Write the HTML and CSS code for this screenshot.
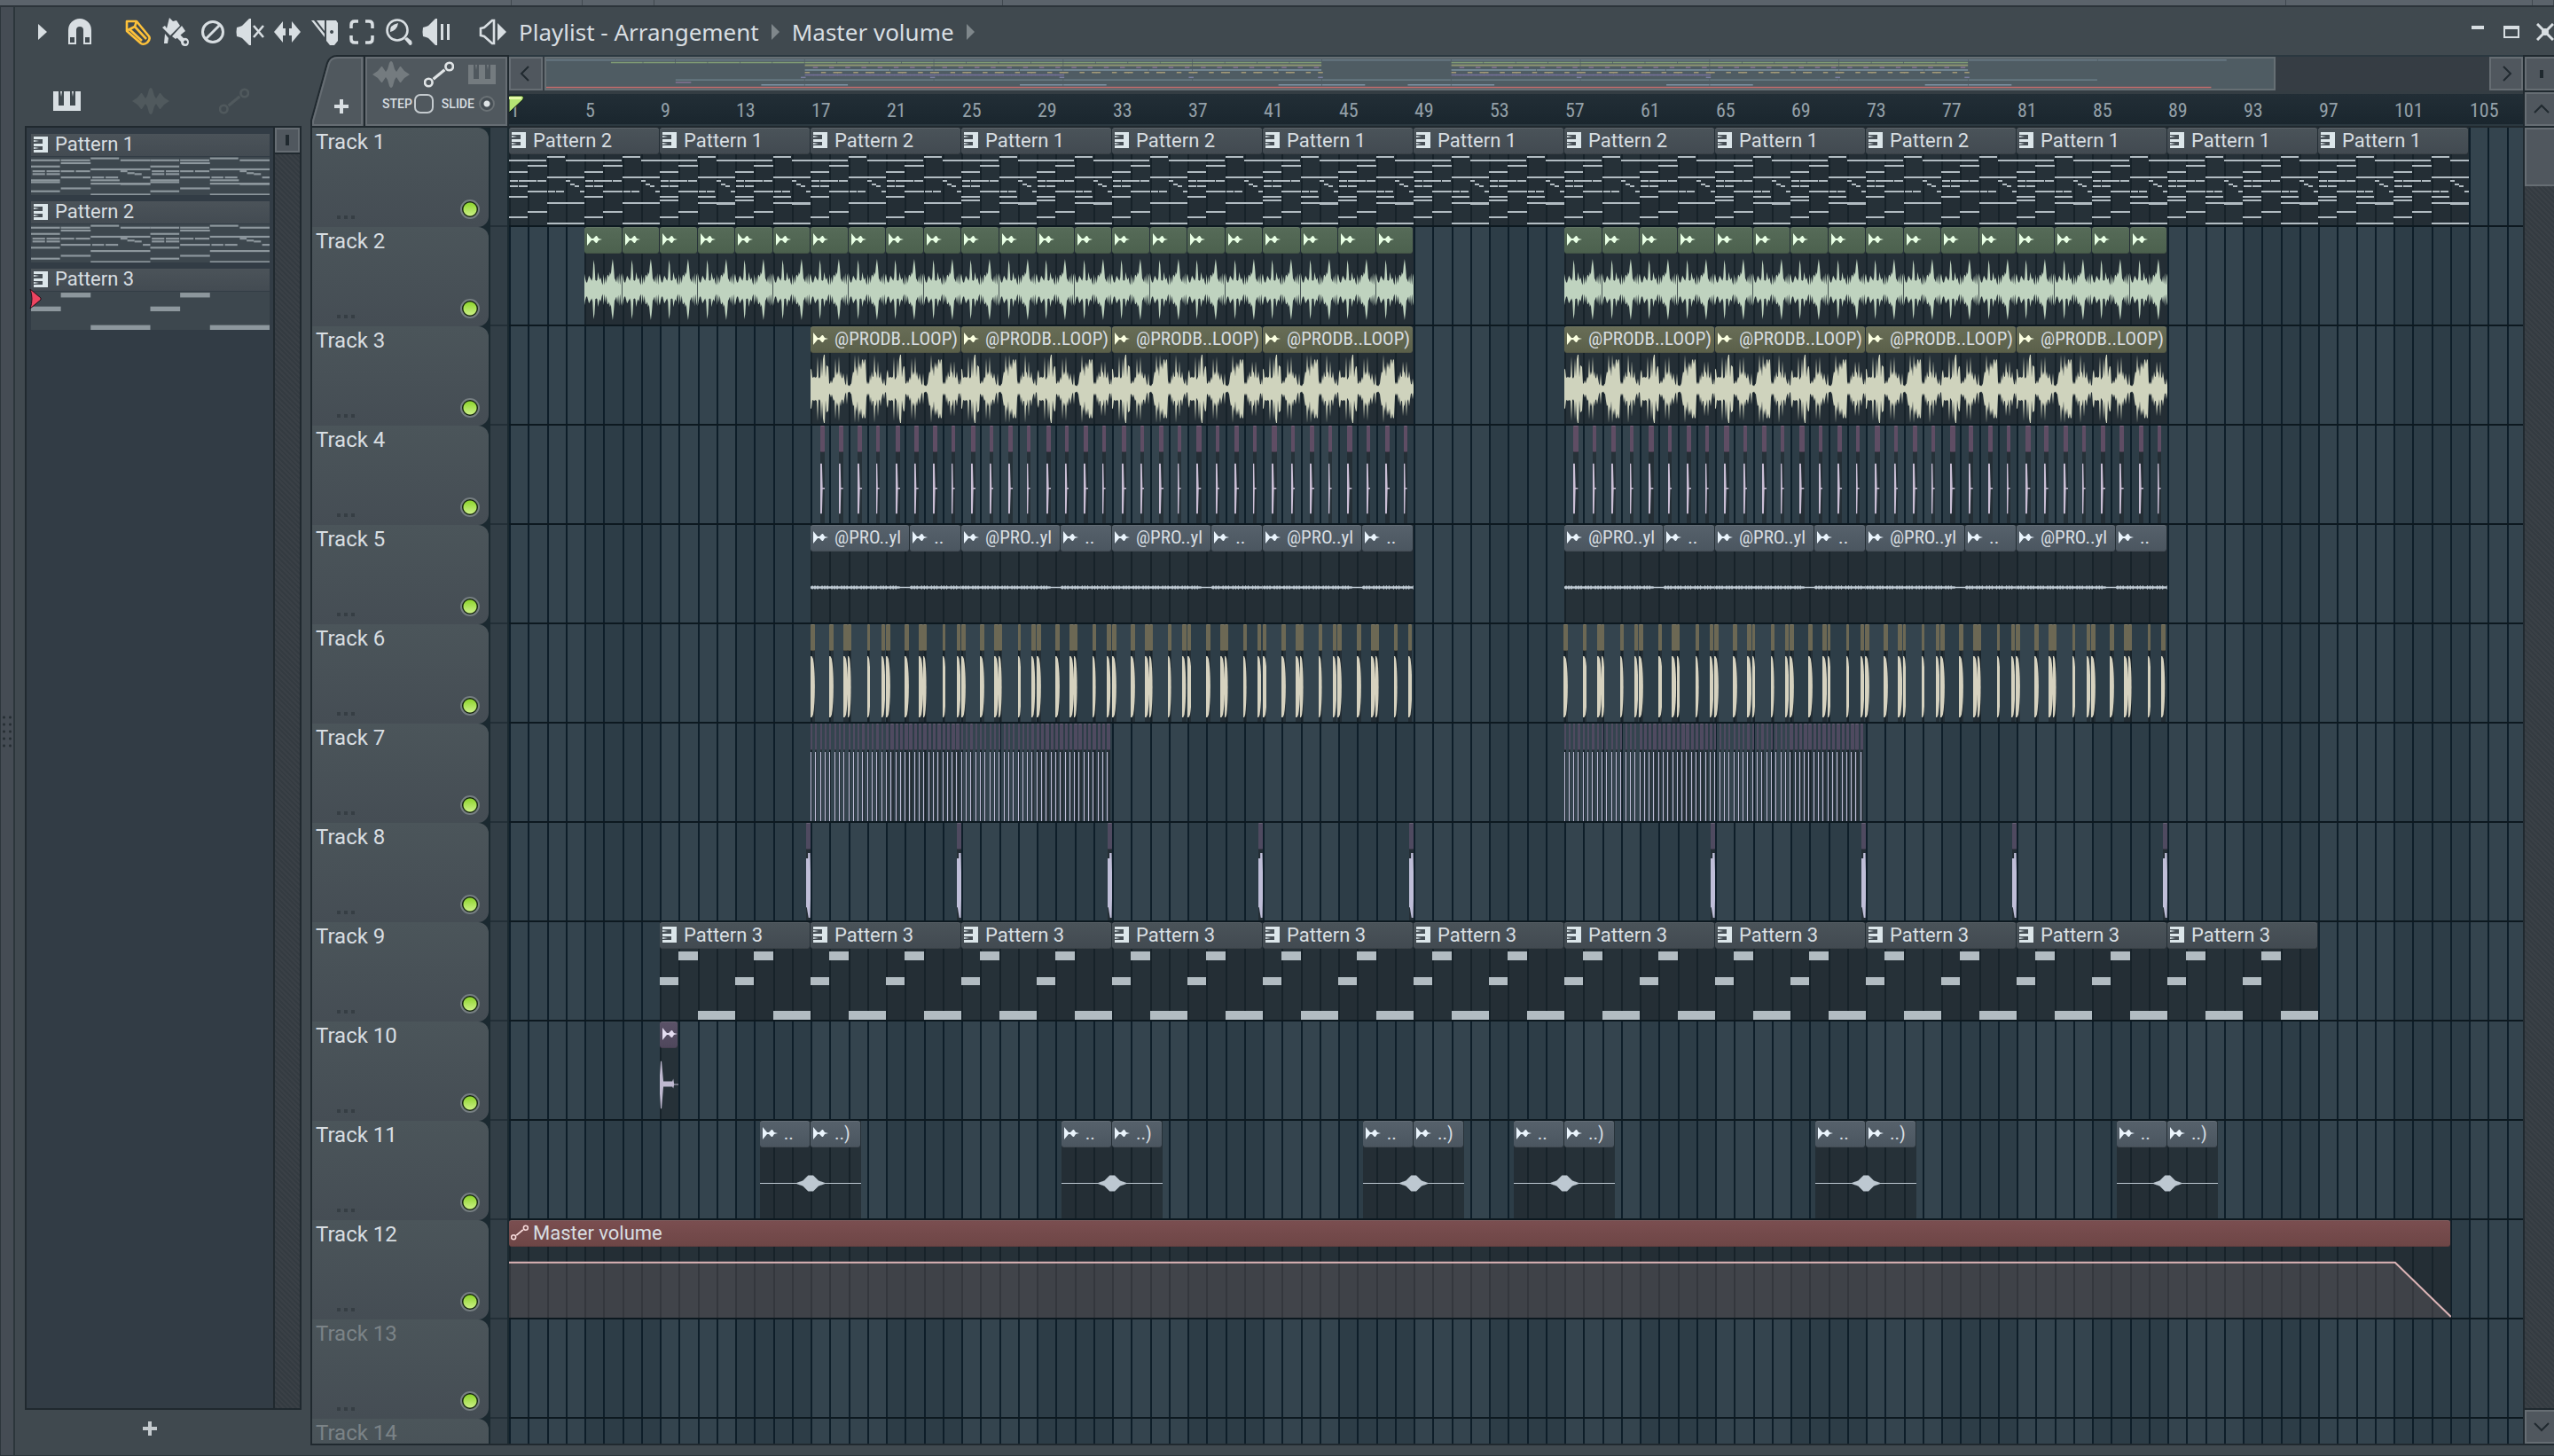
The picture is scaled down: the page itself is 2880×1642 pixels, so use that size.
FILE: index.html
```html
<!DOCTYPE html>
<html lang="en">
<head>
    <meta charset="UTF-8">
    <meta name="viewport" content="width=device-width, initial-scale=1.0">
    <title>Playlist - Arrangement</title>
    <link rel="stylesheet" href="styles.css">
</head>
<body>
    <!-- Shared icons -->
    <svg class="sprite" aria-hidden="true">
        <symbol id="icon-piano" viewBox="0 0 32 24"><path d="M0 1h6v16h6V1h7v16h6V1h6v22H0z"/><path d="M8 1h2l-1 6zM21 1h2l-1 6z"/></symbol>
        <symbol id="icon-wave" viewBox="0 0 42 30"><path d="M0 15l6-4 4-5h1l4 6 2-3 2-7q2-4 4 0l2 7 2 3 4-6h1l4 5 6 4-6 4-4 5h-1l-4-6-2 3-2 7q-2 4-4 0l-2-7-2-3-4 6h-1l-4-5z"/></symbol>
        <symbol id="icon-auto" viewBox="0 0 32 28"><g fill="none" stroke="currentColor" stroke-width="2.5"><circle cx="5" cy="22.5" r="4"/><circle cx="27" cy="5.5" r="4"/><path stroke-width="3" d="M10 19L22 9"/></g></symbol>
        <symbol id="icon-keys" viewBox="0 0 16 18"><path d="M0 0h16v18H0v-3h10v-4H0V8h10V3H0z"/><path d="M0 4l6 1-6 1zM0 12l6 1-6 1z"/></symbol>
        <symbol id="icon-audio" viewBox="0 0 18 14"><path d="M0 0l5 6h2l3-3h1l2 3 4 1-4 1-2 3h-1L7 8H5l-5 6z"/></symbol>
    </svg>

    <div class="host-bar"><span></span><span></span><span></span><span></span><span></span><span></span><span></span></div>

    <div class="window">
        <div class="edge"><div class="grip"></div></div>
        <div class="content">
            <!-- Title bar -->
            <header class="titlebar">
                <button class="menu-button" aria-label="Menu"><svg viewBox="0 0 10 20"><path d="M0 1l10 9-10 9z"/></svg></button>
                <button class="tool magnet" aria-label="Snap"><svg viewBox="0 0 32 32"><path fill-rule="evenodd" d="M3 30V14a13 13 0 0 1 26 0v16h-9V14a4 4 0 0 0-8 0v16zM5 22v6h5v-6zM22 22v6h5v-6z"/></svg></button>
                <div class="tools">
                    <button class="tool active" aria-label="Draw"><svg viewBox="0 0 32 32"><g fill="none" stroke="currentColor" stroke-width="2.6" stroke-linejoin="round"><path d="M3 4h11l14 17q2 3-2 7-4 3-7 1L3 15z"/><path d="M14 4l-2 6-8 4M6 13l14 13M12 10l13 14"/></g></svg></button>
                    <button class="tool" aria-label="Paint"><svg viewBox="0 0 32 32"><path d="M1 11l3-2 2 3L9 0l4 4 4-1 4 6-11 11zM23 9l4 6-11 9-4-3zM4 18l4 5-1 6H3z"/><path fill-rule="evenodd" d="M17 22l4-3 4 4q5-1 6 4 0 5-4 5-5 0-5-5zM27 25.5a2 2 0 1 0 .1 0z"/></svg></button>
                    <button class="tool" aria-label="Delete"><svg viewBox="0 0 32 32"><g fill="none" stroke="currentColor" stroke-width="3"><circle cx="16" cy="16" r="11.5"/><path d="M8 24L24 8"/></g></svg></button>
                    <button class="tool" aria-label="Mute"><svg viewBox="0 0 32 32"><path d="M1 11q4-1 6-2L15 1h2v30h-2L7 23q-2-1-6-2-1-5 0-10z"/><path fill="none" stroke="currentColor" stroke-width="2.6" d="M20 9l11 13M31 9L20 22"/></svg></button>
                    <button class="tool" aria-label="Slip"><svg viewBox="0 0 32 32"><path d="M1 16L11 4v8h3v8h-3v8zM31 16L21 4v8h-3v8h3v8z"/></svg></button>
                    <button class="tool" aria-label="Slice"><svg viewBox="0 0 32 32"><path fill-rule="evenodd" d="M18 3h11l2 3v20l-4 5h-5l-4-5zM24 14a2 2 0 1 0 .1 0z"/><path d="M7 3h9v12zM1 3h3l12 15v4z"/></svg></button>
                    <button class="tool" aria-label="Select"><svg viewBox="0 0 32 32"><path fill="none" stroke="currentColor" stroke-width="3.5" d="M4 12V8q0-4 4-4h4M20 4h4q4 0 4 4v4M28 20v4q0 4-4 4h-4M12 28H8q-4 0-4-4v-4"/></svg></button>
                    <button class="tool" aria-label="Zoom"><svg viewBox="0 0 32 32"><circle cx="14" cy="14" r="11.5" fill="none" stroke="currentColor" stroke-width="2.6"/><path d="M6 16q-1-8 9-10-1 8-9 10zM22 24l3-2 5 4q2 5-2 5z"/></svg></button>
                    <button class="tool" aria-label="Playback"><svg viewBox="0 0 32 32"><path d="M1 11q4-1 6-2L15 1h2v30h-2L7 23q-2-1-6-2-1-5 0-10zM21 7h3v18h-3zM28 7h3v18h-3z"/></svg></button>
                </div>
                <button class="tool" aria-label="Preview"><svg viewBox="0 0 32 32"><path fill="none" stroke="currentColor" stroke-width="2.6" d="M2 12l4-1 9-8h2v26h-2l-9-8-4-1z"/><path d="M21 6l10 10-10 10z"/></svg></button>
                <h1>Playlist - Arrangement</h1>
                <svg class="crumb" viewBox="0 0 9 18"><path d="M0 0l9 9-9 9z"/></svg>
                <h1>Master volume</h1>
                <svg class="crumb" viewBox="0 0 9 18"><path d="M0 0l9 9-9 9z"/></svg>
                <div class="window-buttons">
                    <button aria-label="Minimize"><svg viewBox="0 0 20 20"><path d="M3 3h14v4H3z"/></svg></button>
                    <button aria-label="Maximize"><svg viewBox="0 0 20 20"><path fill-rule="evenodd" d="M1 3h18v14H1zM3 7v8h14V7z"/></svg></button>
                    <button aria-label="Close"><svg viewBox="0 0 20 20"><path fill="none" stroke="currentColor" stroke-width="3" d="M1 1l18 18M19 1L1 19"/><circle cx="10" cy="10" r="4"/></svg></button>
                </div>
            </header>

            <div class="panels">
                <!-- Pattern picker -->
                <aside class="picker">
                    <div class="picker-tabs">
                        <button class="on" aria-label="Patterns"><svg class="piano"><use href="#icon-piano"/></svg></button>
                        <button aria-label="Audio clips"><svg class="wave"><use href="#icon-wave"/></svg></button>
                        <button aria-label="Automation clips"><svg class="auto"><use href="#icon-auto"/></svg></button>
                    </div>
                    <div class="picker-box">
                        <div class="picker-list" id="picker-list"></div>
                        <div class="picker-scroll"><button aria-label="Scroll patterns"></button></div>
                    </div>
                    <button class="add" aria-label="Add pattern"><svg viewBox="0 0 16 16"><path d="M6 0h4v6h6v4h-6v6H6v-6H0V6h6z"/></svg></button>
                </aside>

                <!-- Arrangement -->
                <main class="playlist">
                    <div class="corner">
                        <button class="add-track" aria-label="Add track">
                            <svg class="tab-shape" viewBox="0 0 60 80"><path class="tab-edge" d="M1 82V74L19 9Q22 1 30 1H62V82z"/><path class="tab-shine" d="M3 79V75L21 10Q23 3 31 3H58V79z"/></svg>
                            <svg class="plus" viewBox="0 0 16 16"><path d="M6 0h4v6h6v4h-6v6H6v-6H0V6h6z"/></svg>
                        </button>
                        <div class="options">
                            <div class="modes">
                                <button aria-label="Audio"><svg class="wave"><use href="#icon-wave"/></svg></button>
                                <button class="on" aria-label="Automation"><svg class="auto"><use href="#icon-auto"/></svg></button>
                                <button aria-label="Notes"><svg class="piano"><use href="#icon-piano"/></svg></button>
                            </div>
                            <div class="switches">
                                <label for="step">STEP</label><input type="checkbox" id="step">
                                <label for="slide">SLIDE</label><input type="radio" id="slide" checked>
                            </div>
                        </div>
                    </div>
                    <div class="top">
                        <div class="overview">
                            <button aria-label="Scroll left"><svg viewBox="0 0 20 20"><path d="M13 2L5 10l8 8"/></svg></button>
                            <div class="overview-track"><div class="overview-thumb" id="overview"></div></div>
                            <button aria-label="Scroll right"><svg viewBox="0 0 20 20"><path d="M7 2l8 8-8 8"/></svg></button>
                        </div>
                        <div class="ruler" id="ruler">
                            <svg class="playhead" viewBox="0 0 18 22"><path d="M0 1h15q2 1 1 4L0 20z" fill="#b5e574" stroke="#0c1a14"/><path d="M0 2h14v3L3 5H0z" fill="#e4f9a8"/></svg>
                        </div>
                    </div>
                    <div class="scroll-top">
                        <button aria-label="Zoom tracks"><svg viewBox="0 0 20 20"><path d="M9 7h2v7H9z"/></svg></button>
                        <button aria-label="Scroll up"><svg viewBox="0 0 20 20"><path d="M2 14l8-8 8 8"/></svg></button>
                    </div>
                    <div class="tracks" id="tracks"></div>
                    <div class="scroll-side">
                        <div class="thumb"></div>
                        <button aria-label="Scroll down"><svg viewBox="0 0 20 20"><path d="M2 6l8 8 8-8"/></svg></button>
                    </div>
                </main>
            </div>
        </div>
    </div>

    <script src="script.js"></script>
</body>
</html>
```
FILE: styles.css
```css
* {
    box-sizing: border-box;
}
body {
    margin: 0;
    height: 100vh;
    display: flex;
    flex-direction: column;
    overflow: hidden;
    background-color: #40484f;
    color: #d8dee2;
    font-family: Roboto, Arial, sans-serif;
    font-size: 22px;
}
button {
    padding: 0;
    border: none;
    background: none;
    color: inherit;
    display: flex;
    align-items: center;
    justify-content: center;
    cursor: pointer;
}
svg {
    display: block;
    fill: currentColor;
}
.sprite {
    display: none;
}
.piano { width: 32px; height: 24px; }
.wave { width: 42px; height: 30px; }
.auto { width: 34px; height: 30px; }

.host-bar {
    flex: none;
    height: 8px;
    display: flex;
    background-color: #5b636b;
    border-bottom: 2px solid #2c343a;
}
.host-bar span {
    flex: 80;
    border-right: 1px solid #40484f;
}
.host-bar span:nth-child(1) { flex: 577; }
.host-bar span:nth-child(4) { flex: 393; }
.host-bar span:nth-child(5) { flex: 1449; }
.host-bar span:nth-child(6) { flex: 278; }
.host-bar span:nth-child(7) { flex: 23; }

.window {
    flex: 1;
    min-height: 0;
    display: flex;
    border-bottom: 1px solid #2c363b;
}
.edge {
    flex: none;
    width: 17px;
    display: flex;
    align-items: center;
    background-color: #454c54;
    border-left: 1px solid #2c363b;
    border-right: 2px solid #2c363b;
}
.grip {
    width: 14px;
    height: 40px;
    background: radial-gradient(circle, #262e33 1px, transparent 2px) 0 0 / 7px 8px;
}
.content {
    flex: 1;
    min-width: 0;
    display: flex;
    flex-direction: column;
    background-color: #40494f;
}

/* Title bar */
.titlebar {
    flex: none;
    height: 54px;
    padding: 2px 0 0 26px;
    display: flex;
    align-items: center;
}
.menu-button svg {
    width: 10px;
    height: 20px;
}
.tool {
    width: 42px;
    height: 42px;
}
.tool svg {
    width: 32px;
    height: 32px;
}
.magnet {
    margin: 0 24px 0 16px;
}
.tools {
    display: flex;
    margin-right: 22px;
}
.tool.active {
    color: #fdc13a;
}
h1 {
    margin: 0 14px 0 8px;
    font-family: "Noto Sans", sans-serif;
    font-size: 26px;
    line-height: 36px;
    font-weight: normal;
}
.crumb {
    width: 9px;
    height: 18px;
    margin-right: 6px;
    color: #7f878b;
}
.window-buttons {
    margin-left: auto;
    display: flex;
    gap: 18px;
}
.window-buttons svg {
    width: 20px;
    height: 20px;
}

.panels {
    flex: 1;
    min-height: 0;
    display: flex;
}

/* Pattern picker */
.picker {
    flex: none;
    width: 323px;
    margin-right: 10px;
    padding-left: 11px;
    display: flex;
    flex-direction: column;
}
.picker-tabs {
    height: 80px;
    padding: 24px 59px 0 32px;
    display: flex;
    justify-content: space-between;
    color: #50595d;
}
.picker-tabs .on {
    color: #d8dee2;
}
.picker-box {
    flex: 1;
    display: flex;
    border: 2px solid #20292f;
    background-color: #323c45;
}
.picker-list {
    flex: 1;
    padding: 7px 4px 0 5px;
    border-right: 2px solid #20292f;
}
.picker-scroll {
    width: 28px;
    background: repeating-linear-gradient(45deg, #343b41 0 2px, #3a4046 2px 4px);
}
.picker-scroll button {
    width: 28px;
    height: 28px;
    background-color: #50575e;
    border: 2px solid #666d73;
    box-shadow: 0 2px #20292f;
}
.picker-scroll button::before {
    content: "";
    width: 4px;
    height: 12px;
    background-color: #20292f;
}
.name {
    display: flex;
    align-items: center;
    gap: 8px;
    padding: 0 0 2px 3px;
}
.name svg {
    flex: none;
    width: 16px;
    height: 18px;
    color: #dce6ea;
}
.pattern {
    height: 76px;
    position: relative;
}
.pattern .name {
    height: 25px;
    background: linear-gradient(#4b5359, #434b52);
}
.pattern .notes {
    width: 100%;
    height: 43px;
    margin-top: 1px;
    background-color: #3d474e;
    color: #8d979d;
}
.pattern .selected {
    position: absolute;
    left: -2px;
    top: 23px;
    width: 14px;
    height: 22px;
}
.add {
    height: 51px;
    padding: 0 31px 9px 0;
}
.add svg {
    width: 16px;
    height: 16px;
    color: #c4cace;
}

/* Arrangement */
.playlist {
    flex: 1;
    min-width: 0;
    display: grid;
    grid-template-columns: 224px minmax(0, 1fr) 35px;
    grid-template-rows: 82px minmax(0, 1fr);
    margin-bottom: 11px;
    border-bottom: 2px solid #20292f;
}
.corner {
    display: flex;
    border-bottom: 2px solid #20292f;
}
.add-track {
    width: 60px;
    height: 80px;
    position: relative;
}
.tab-shape {
    position: absolute;
    inset: 0;
    width: 60px;
    height: 80px;
}
.tab-edge {
    fill: #50585e;
    stroke: #20292f;
    stroke-width: 2px;
}
.tab-shine {
    fill: none;
    stroke: #666d73;
    stroke-width: 2px;
}
.plus {
    position: relative;
    width: 16px;
    height: 16px;
    margin: 36px 0 0 9px;
}
.options {
    flex: 1;
    margin: 2px 2px 0;
    background-color: #50585e;
    border: 2px solid #666d73;
    outline: 2px solid #20292f;
}
.modes {
    height: 36px;
    padding: 0 10px 0 6px;
    display: flex;
    justify-content: space-between;
    align-items: center;
    color: #747b7f;
}
.modes .on {
    color: #e0e4e6;
}
.switches {
    display: flex;
    align-items: center;
    padding: 4px 0 0 17px;
    font-size: 14px;
    font-weight: 500;
}
.switches label + input {
    appearance: none;
    margin: 0 9px 0 2px;
    width: 22px;
    height: 22px;
    border: 2px solid #c4cace;
    border-radius: 7px;
}
.switches input[type="radio"] {
    width: 18px;
    height: 18px;
    margin: 0 0 0 5px;
    border-color: #6b7276;
    border-radius: 50%;
    background: radial-gradient(circle, #dfe4e6 3px, #464e54 4px);
}
.top {
    padding-top: 2px;
    border-bottom: 2px solid #20292f;
    background-color: #2b3840;
}
.overview {
    height: 42px;
    display: flex;
    background-color: #363d44;
    border-bottom: 4px solid #343d43;
}
.overview button,
.scroll-top button,
.scroll-side button {
    flex: none;
    width: 38px;
    height: 38px;
    background-color: #50575e;
    border: 2px solid #666d73;
    color: #20292f;
}
.overview button svg,
.scroll-top svg,
.scroll-side svg {
    width: 20px;
    height: 20px;
    fill: none;
    stroke: currentColor;
    stroke-width: 2px;
}
.overview-track {
    flex: 1;
    padding-left: 2px;
}
.overview-thumb {
    width: 89%;
    height: 38px;
    background-color: #4f5c63;
    border: 2px solid #666f74;
}
.overview-thumb svg {
    width: 100%;
    height: 34px;
}
.ruler {
    position: relative;
    height: 34px;
    display: flex;
    align-items: center;
    overflow: hidden;
    background: linear-gradient(#222e36, #1a262e);
    color: #94a0a8;
    font-family: "Liberation Sans Narrow", "Roboto Condensed", Roboto, sans-serif;
}
.ruler span {
    flex: none;
    padding: 2px 0 0 1px;
}
.playhead {
    position: absolute;
    left: 0;
    top: 1px;
    width: 18px;
    height: 22px;
}
.scroll-top {
    padding-top: 2px;
    display: flex;
    flex-direction: column;
    gap: 2px;
    border-left: 2px solid #20292f;
    background-color: #20292f;
}
.tracks {
    grid-column: 1 / 3;
    overflow: hidden;
}
.track {
    height: 112px;
    display: grid;
    grid-template-columns: 203px 19px 2px minmax(0, 1fr);
    background-color: #1b2930;
}
.track-head {
    margin-right: 2px;
    padding: 0 10px 9px 4px;
    border-left: 2px solid #20292f;
    border-radius: 0 12px 12px 0;
    background: linear-gradient(#4b555a, #454d54);
    display: grid;
    grid-template-columns: 1fr auto;
    grid-template-rows: 1fr auto;
    align-items: end;
}
.track-head h2 {
    grid-column: 1 / 3;
    align-self: start;
    margin: 0;
    font-size: 24px;
    line-height: 32px;
    font-weight: normal;
}
.track.empty h2 {
    color: #7b8387;
}
.dots {
    width: 20px;
    height: 4px;
    margin: 0 0 0 24px;
    background: repeating-linear-gradient(to right, #363e44 0 4px, transparent 4px 8px);
}
.led {
    appearance: none;
    width: 22px;
    height: 22px;
    margin: 0;
    border: 2px solid #767e82;
    border-radius: 50%;
    background: radial-gradient(circle, transparent 7px, #14240f 8px), linear-gradient(#86d122, #d3f490);
}
.gutter {
    background-color: #323e46;
    border-bottom: 2px solid #232f37;
}
.lane {
    grid-column: 4;
    display: flex;
    overflow: hidden;
    border-bottom: 2px solid #0d1920;
    background:
        repeating-linear-gradient(to right, #0e1e29 0 2px, transparent 2px calc(100% / 106.87)),
        repeating-linear-gradient(to right, #34444e 0 calc(400% / 106.87), #2d3d47 calc(400% / 106.87) calc(800% / 106.87));
}
.clip {
    flex: none;
    display: flex;
    flex-direction: column;
    overflow: hidden;
    background-color: rgba(30, 36, 42, 0.6);
}
.clip .name {
    flex: none;
    height: 30px;
    margin: 0 1px 1px 0;
    border-top: 1px solid #ffffff22;
    border-bottom: 1px solid #00000033;
    border-radius: 3px;
    overflow: hidden;
    white-space: nowrap;
}
.clip .audio-icon {
    width: 18px;
    height: 14px;
    margin-right: -2px;
}
.clip .auto-icon {
    width: 20px;
    height: 20px;
}
.clip .body {
    flex: 1;
    min-height: 0;
    width: 100%;
}
.clip.tiny .name {
    padding: 0;
    margin-right: 0;
    border-radius: 1px;
}
.clip.audio .name {
    font-family: "Liberation Sans Narrow", "Roboto Condensed", Roboto, sans-serif;
    font-size: 21px;
}
.midi .name { background: linear-gradient(#4a5359, #424a51); }
.midi .body { color: #b2bcc2; shape-rendering: crispEdges; }
.green .name { background: linear-gradient(#566b58, #4c614e); }
.green .name svg { color: #e8ffe4; }
.green .body { color: #bfd3bf; }
.olive .name { background: linear-gradient(#686d56, #5b604a); }
.olive .name svg { color: #fbffe0; }
.olive .body { color: #cfd3bd; }
.pink .name { background-color: #5f4d64; }
.pink .body { color: #cbbfd6; }
.steel .name { background: linear-gradient(#56616b, #4b5660); }
.steel .name svg { color: #eaf4fc; }
.steel .body { color: #bdc8d1; }
.sand .name { background-color: #6c6854; }
.sand .body { color: #d6d2bf; }
.violet .name { background-color: #4f4a60; }
.violet .body { color: #bfbed8; }
.plum .name { background: linear-gradient(#5b5268, #4f475c); }
.plum .name svg { color: #e4dcf0; }
.plum .body { color: #bfb9d0; }
.red .name { background: linear-gradient(#7a4e50, #6e4646); padding-left: 2px; gap: 5px; }
.red .name svg { color: #f8dcdc; }
.red .body { color: #dcb4b6; }

.scroll-side {
    display: flex;
    flex-direction: column;
    border-left: 2px solid #20292f;
    background: repeating-linear-gradient(45deg, #343b41 0 2px, #3a4046 2px 4px);
}
.thumb {
    height: 66px;
    background-color: #50575e;
    border: 2px solid #666d73;
    border-right: none;
}
.scroll-side button {
    margin-top: auto;
    outline: 2px solid #20292f;
}
```
FILE: script.js
```js
const BARS = 106.87;   // bars visible in the timeline
const BAR = 21.25;     // drawing units per bar
const BODY = 80;       // drawing units of clip height below the name

const pct = bars => (bars / BARS * 100) + '%';
const rect = (x, y, w, h) => `<rect x="${x}" y="${y}" width="${w}" height="${h}"/>`;

// Notes are [bar, length, y] inside a 4 bar phrase
const chords = [
    [2, 0.95, 1], [0, 0.97, 5], [1, 0.98, 5], [3, 1, 5], [1, 1, 11], [0, 0.97, 18], [2, 2, 24],
    [0.05, 0.42, 28], [0.52, 0.45, 28], [1, 0.45, 28], [1.5, 0.48, 28], [3, 0.23, 28], [3.23, 0.24, 32],
    [0.05, 0.42, 34], [0.52, 0.45, 34], [3.47, 0.24, 34], [1, 1, 41], [2.05, 0.4, 41], [2.5, 0.42, 41], [3.75, 0.25, 41],
    [0, 0.97, 47], [2, 2, 54], [1, 1, 64], [0, 0.97, 70], [2, 2, 77]
];
const extra = [[0, 0.97, 51], [2, 0.97, 47], [3, 1, 55]];

function notes(kind) {
    let out = '';
    for (let phrase = 0; phrase < 8; phrase += 4) {
        if (kind === 3) {
            out += rect(phrase * BAR, 31, BAR, 10) + rect((phrase + 1) * BAR, 2, BAR, 10) + rect((phrase + 2) * BAR, 70, 2 * BAR, 10);
            continue;
        }
        const list = kind === 1 ? chords.concat(extra) : chords;
        for (const n of list) out += rect((phrase + n[0]) * BAR, n[2], n[1] * BAR, 2);
    }
    return out;
}

// Mirrored waveform around the middle of the clip
function wave(amps, step) {
    const mid = BODY / 2;
    let up = `M0 ${mid}`, down = '';
    amps.forEach((a, i) => {
        up += `L${i * step} ${mid - a}`;
        down = `L${i * step} ${mid + a}` + down;
    });
    return `<path d="${up}${down}Z"/>`;
}

const drums = [18, 12, 8, 8, 12, 16, 14, 12, 10, 14, 34, 28, 11, 10, 11, 20, 14, 11, 14, 8, 5, 18, 5, 15, 7, 16, 17, 14, 20, 17, 28, 35, 26, 13, 11, 8, 16, 6, 19, 5, 15, 19];
const loop = [23, 22, 13, 13, 14, 13, 13, 14, 37, 13, 12, 14, 35, 14, 34, 39, 39, 13, 27, 26, 25, 6, 6, 10, 6, 10, 14, 12, 35, 15, 20, 16, 37, 14, 20, 13, 12, 18, 12, 6, 4,
    18, 4, 4, 3, 5, 6, 14, 20, 18, 39, 20, 26, 14, 39, 24, 30, 22, 33, 34, 28, 34, 33, 10, 5, 8, 5, 16, 9, 20, 14, 14, 39, 20, 18, 12, 32, 14, 12, 20, 12, 7, 5, 12, 4, 4];
const hum = [];
for (let i = 0; i < 113; i++) hum.push(i > 100 ? 0.8 : 1.3 + (i * 37 % 11 > 7 ? 1.2 : 0));
const rise = [];
for (let i = 0; i <= 57; i++) rise.push(i < 42 ? 0.5 : i < 48 ? 1 + (i - 42) / 3 : Math.min(9, 3 + (i - 48)));

const bodies = {
    p1: [170, notes(1)],
    p2: [170, notes(2)],
    p3: [170, notes(3)],
    drums: [42.5, wave(drums, 1.03)],
    loop: [170, wave(loop.concat(loop.map((a, i) => i % 9 ? a : a * 0.8)), 1)],
    hum: [112, wave(hum, 1)],
    humShort: [57, wave(hum.slice(0, 58), 1)],
    snare: [5, '<path d="M0 12h1.8L2.5 39.5H5V41H2.5L1.8 69H0z"/>'],
    kick: [5, '<path d="M0 5h1.500l1.500 3q2 12 2 32t-2 32l-1.500 3H0z"/>'],
    hat: [3, rect(0, 1, 1, 79)],
    hatThin: [2, rect(0, 1, 1, 79)],
    crash: [5, '<path d="M0 9h2V3h2.300L5 40l-.7 37H2.600L1.500 70 .8 65H0z"/>'],
    hit: [21, '<path d="M0 30L1 14h1l2 23h10l1-3 1 6h5v1h-5l-1 4-1-2H4L2 68H1L0 51z"/>'],
    rise: [57, wave(rise, 1)],
    fall: [57, wave(rise.slice().reverse(), 1)],
    fade: [2189, '<path fill-opacity="0.15" d="M0 17H2126L2189 79V80H0z"/><path fill="none" stroke="currentColor" stroke-width="2" d="M0 17H2126L2189 79"/>']
};

const icons = {
    midi: '<svg viewBox="0 0 16 18"><use href="#icon-keys"/></svg>',
    audio: '<svg class="audio-icon"><use href="#icon-audio"/></svg>',
    automation: '<svg class="auto-icon"><use href="#icon-auto"/></svg>'
};

const lanes = Array.from({ length: 14 }, () => []);
function add(track, start, length, type, body, label) {
    lanes[track - 1].push({ start, length, type, body, label });
}
function range(from, to, step, fn) {
    for (let bar = from; bar < to - 0.001; bar += step) fn(bar);
}

[2, 1, 2, 1, 2, 1, 1, 2, 1, 2, 1, 1, 1].forEach((p, i) => add(1, i * 8, 8, 'midi', 'p' + p, 'Pattern ' + p));
range(4, 48, 2, b => add(2, b, 2, 'audio green', 'drums', ''));
range(56, 88, 2, b => add(2, b, 2, 'audio green', 'drums', ''));
[16, 56].forEach(from => {
    range(from, from + 32, 8, b => {
        add(3, b, 8, 'audio olive', 'loop', '@PRODB..LOOP)');
        add(5, b, 5.28, 'audio steel', 'hum', '@PRO..yl');
        add(5, b + 5.28, 2.72, 'audio steel', 'humShort', '..');
    });
    range(from, from + 32, 4, b => {
        [0.25, 0.22, 0.25, 0.17].forEach((w, i) => add(4, b + 0.5 + i, w, 'tiny pink', 'snare'));
        [[0, 0.23], [1, 0.23], [1.75, 0.24], [2, 0.17], [3, 0.17], [3.75, 0.2]].forEach(k => add(6, b + k[0], k[1], 'tiny sand', 'kick'));
    });
    range(from, from + 16, 0.25, b => {
        const thin = (b - from) % 8 < 4;
        add(7, b, thin ? 0.1 : 0.16, 'tiny violet', thin ? 'hatThin' : 'hat');
    });
});
[16, 24, 32, 40, 48, 64, 72, 80, 88].forEach(b => add(8, b - 0.25, 0.25, 'tiny violet', 'crash'));
range(8, 96, 8, b => add(9, b, 8, 'midi', 'p3', 'Pattern 3'));
add(10, 8, 1, 'audio plum', 'hit', '');
[16, 32, 48, 56, 72, 88].forEach(b => {
    add(11, b - 2.7, 2.7, 'audio steel', 'rise', '..');
    add(11, b, 2.7, 'audio steel', 'fall', '..)');
});
add(12, 0, 103.05, 'automation red', 'fade', 'Master volume');

function clipHtml(clip, end) {
    const kind = clip.type.split(' ')[0];
    const [width, shape] = bodies[clip.body];
    const label = clip.label ? `<span>${clip.label}</span>` : '';
    return `<div class="clip ${clip.type}" style="width:${pct(clip.length)};margin-left:${pct(clip.start - end)}">
        <div class="name">${icons[kind] || ''}${label}</div>
        <svg class="body" viewBox="0 0 ${width} ${BODY}" preserveAspectRatio="none">${shape}</svg>
    </div>`;
}

document.getElementById('tracks').innerHTML = lanes.map((clips, i) => {
    let end = 0;
    const html = clips.map(clip => {
        const out = clipHtml(clip, end);
        end = clip.start + clip.length;
        return out;
    }).join('');
    return `<section class="track ${clips.length ? '' : 'empty'}">
        <div class="track-head"><h2>Track ${i + 1}</h2><div class="dots"></div><input class="led" type="checkbox" checked aria-label="Track ${i + 1} on"></div>
        <div class="gutter"></div>
        <div class="lane">${html}</div>
    </section>`;
}).join('');

let ruler = '';
for (let bar = 1; bar < BARS; bar += 4) ruler += `<span style="width:${pct(4)}">${bar}</span>`;
document.getElementById('ruler').insertAdjacentHTML('afterbegin', ruler);

// Overview of all the tracks in the scroll bar
const colors = ['#6b7c88', '#7f9a74', '#8f9672', '#857495', '#7d93a2', '#a39a78', '#75709a', '#7c7fa0', '#6a7d86', '#857495', '#7d93a6', '#c46c6c'];
let mini = '';
lanes.forEach((clips, i) => clips.forEach(c => {
    mini += `<rect x="${c.start}" y="${1 + i * 2.8}" width="${Math.max(c.length - 0.04, 0.3)}" height="${i === 2 ? 2 : 1.5}" fill="${colors[i]}"/>`;
}));
document.getElementById('overview').innerHTML = `<svg viewBox="0 0 ${BARS} 34" preserveAspectRatio="none">${mini}</svg>`;

const marker = '<svg class="selected" viewBox="0 0 14 22"><path d="M1 0q4 11 0 22L13 12V10z" fill="#ee4460" stroke="#20101a"/></svg>';
document.getElementById('picker-list').innerHTML = [1, 2, 3].map(p => `<div class="pattern">
    <div class="name">${icons.midi}<span>Pattern ${p}</span></div>
    <svg class="notes" viewBox="0 0 170 80" preserveAspectRatio="none">${notes(p).replace(/height="2"/g, 'height="4"')}</svg>
    ${p === 3 ? marker : ''}
</div>`).join('');
```
